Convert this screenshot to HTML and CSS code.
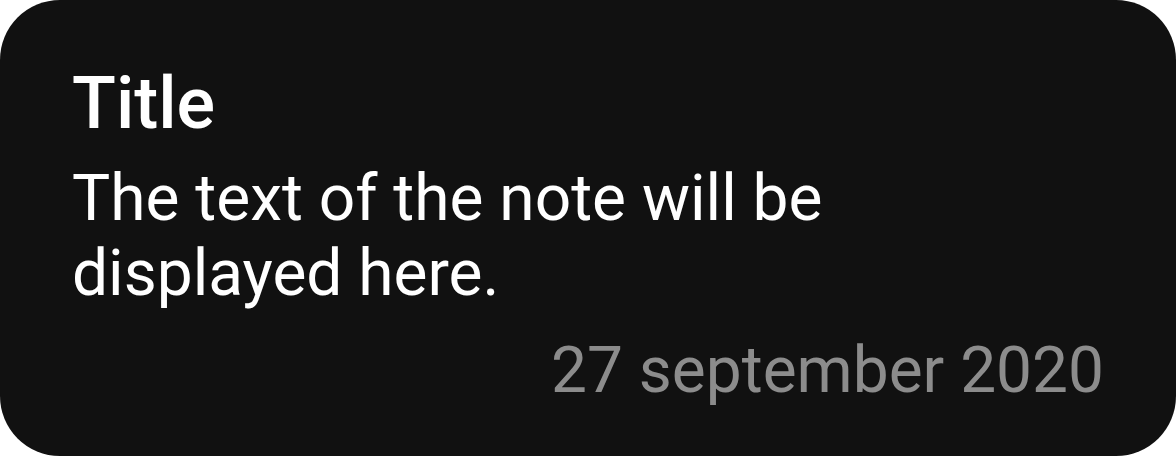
FILE: index.html
```html
<!DOCTYPE html>
<html lang="en">
<head>
<meta charset="utf-8">
<title>Note</title>
<link rel="stylesheet" href="styles.css">
</head>
<body>
<div class="note">
  <div class="note-title">Title</div>
  <div class="note-text">The text of the note will be<br>displayed here.</div>
  <div class="note-date">27 september 2020</div>
</div>
</body>
</html>
```
FILE: styles.css
```css
html, body {
  margin: 0;
  padding: 0;
  background: #ffffff;
}
.note {
  box-sizing: border-box;
  width: 1176px;
  height: 456px;
  background: #111111;
  border-radius: 60px;
  padding: 61px 72px 0 72px;
  display: flex;
  flex-direction: column;
  font-family: Roboto, "Noto Sans", sans-serif;
  color: #ffffff;
}
.note-title {
  font-size: 72px;
  font-weight: 500;
  line-height: normal;
  margin-bottom: 15px;
}
.note-text {
  font-size: 64px;
  line-height: normal;
}
.note-date {
  margin-top: 22px;
  font-size: 64px;
  line-height: normal;
  color: #8c8c8c;
  text-align: right;
}
```
